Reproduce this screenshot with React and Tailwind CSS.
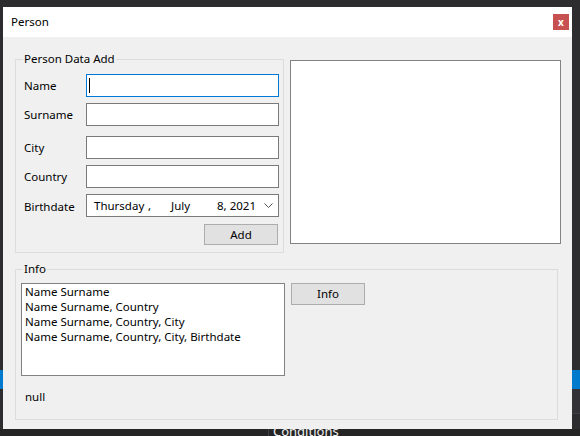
import React from "react";

function Field({ label, focused, children, labelClass = "" }) {
  return (
    <div className="flex items-center">
      <div className={"w-[62px] " + labelClass}>{label}</div>
      <div
        className={
          "w-[193px] h-[23px] bg-white border flex items-center " +
          (focused ? "border-[#0078d7]" : "border-[#7a7a7a]")
        }
      >
        {children}
      </div>
    </div>
  );
}

export default function App() {
  return (
    <div className="w-[580px] h-[436px] bg-[#2d2d30] relative overflow-hidden font-['Noto_Sans',sans-serif] text-[11.5px] text-black">
      {/* background IDE bits */}
      <div className="absolute left-0 top-[370px] w-[3px] h-[19px] bg-[#007acc]" />
      <div className="absolute right-0 top-[370px] w-[8px] h-[19px] bg-[#007acc]" />
      <div className="absolute right-0 top-[389px] w-[8px] h-[24px] bg-[#333337]" />
      <div className="absolute right-0 top-[413px] w-[8px] h-[1px] bg-[#3f3f46]" />
      <div className="absolute left-0 right-0 bottom-0 h-[7px] bg-[#252526]" />
      <div className="absolute left-[268px] bottom-0 w-[1px] h-[7px] bg-[#3f3f46]" />
      <div className="absolute left-[273px] top-[423px] text-[13px] leading-[16px] text-[#f1f1f1]">
        Conditions
      </div>

      {/* window */}
      <div className="absolute left-[3px] top-[7px] w-[569px] h-[422px] flex flex-col">
        <div className="h-[30px] bg-white flex items-center justify-between pl-[8px] pr-[3px]">
          <span className="leading-[16px]">Person</span>
          <div className="w-[16px] h-[16px] bg-[#c75050] text-white flex items-center justify-center text-[10px] font-bold leading-none">
            x
          </div>
        </div>

        <div className="flex-1 bg-[#f0f0f0] flex flex-col">
          <div className="flex items-start">
            {/* Person Data Add group */}
            <div className="relative ml-[12px] mt-[22px] w-[269px] h-[194px] border border-[#dcdcdc]">
              <span className="absolute -top-[9px] left-[7px] px-[1px] leading-[16px] bg-[#f0f0f0]">
                Person Data Add
              </span>
              <div className="flex flex-col pl-[8px] pt-[14px]">
                <Field label="Name" focused>
                  <div className="ml-[2px] w-[1px] h-[15px] bg-black" />
                </Field>
                <div className="mt-[6px]">
                  <Field label="Surname" />
                </div>
                <div className="mt-[10px]">
                  <Field label="City" />
                </div>
                <div className="mt-[6px]">
                  <Field label="Country" />
                </div>
                <div className="mt-[6px]">
                  <Field label="Birthdate" labelClass="pt-[3px]">
                    <div className="flex items-center w-full pl-[7px] pr-[5px]">
                      <span className="w-[54px]">Thursday</span>
                      <span className="w-[23px]">,</span>
                      <span>July</span>
                      <span className="ml-auto">8, 2021</span>
                      <svg width="9" height="6" viewBox="0 0 9 6" className="ml-[8px]">
                        <polyline points="0.5,0.5 4.5,4.5 8.5,0.5" fill="none" stroke="#555" strokeWidth="1" />
                      </svg>
                    </div>
                  </Field>
                </div>
                <div className="mt-[7px] flex">
                  <button className="ml-[180px] w-[74px] h-[21px] bg-[#e1e1e1] border border-[#adadad] flex items-center justify-center leading-none">
                    Add
                  </button>
                </div>
              </div>
            </div>

            {/* right box */}
            <div className="ml-[6px] mt-[23px] w-[271px] h-[184px] bg-white border border-[#828282]" />
          </div>

          {/* Info group */}
          <div className="relative ml-[12px] mt-[16px] w-[543px] h-[151px] border border-[#dcdcdc]">
            <span className="absolute -top-[9px] left-[7px] px-[1px] leading-[16px] bg-[#f0f0f0]">
              Info
            </span>
            <div className="flex items-start pl-[5px] pt-[13px]">
              <div className="w-[264px] h-[93px] bg-white border border-[#828282] pl-[3px] leading-[15px]">
                <div>Name Surname</div>
                <div>Name Surname, Country</div>
                <div>Name Surname, Country, City</div>
                <div>Name Surname, Country, City, Birthdate</div>
              </div>
              <button className="ml-[6px] w-[74px] h-[22px] bg-[#e1e1e1] border border-[#adadad] flex items-center justify-center leading-none">
                Info
              </button>
            </div>
            <div className="pl-[9px] mt-[13px] leading-[16px]">null</div>
          </div>
        </div>
      </div>
    </div>
  );
}
